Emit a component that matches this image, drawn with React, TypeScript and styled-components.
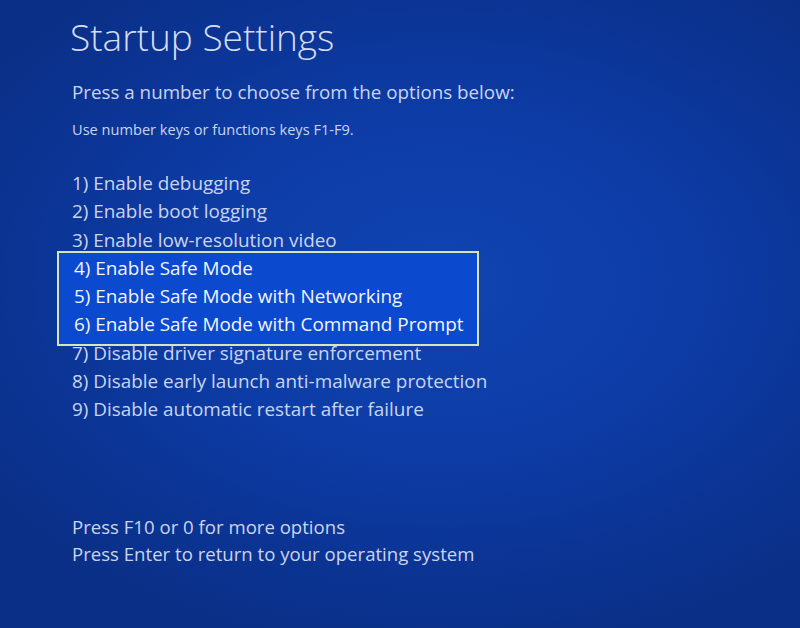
import React from 'react'
import styled, { createGlobalStyle } from 'styled-components'

const GlobalStyle = createGlobalStyle`
  html, body {
    margin: 0;
    padding: 0;
  }
  body {
    font-family: 'Open Sans', 'Noto Sans', sans-serif;
  }
`

const Screen = styled.div`
  width: 800px;
  height: 628px;
  box-sizing: border-box;
  padding: 13px 0 0 70px;
  color: #c9d5ee;
  background:
    radial-gradient(ellipse 70% 60% at 55% 45%, #1043b2 0%, #0d3ca6 45%, #0b3494 75%, #0a2f86 100%);
  overflow: hidden;
  display: flex;
  flex-direction: column;
`

const Title = styled.h1`
  margin: 0;
  font-size: 37px;
  font-weight: 300;
  color: #d5ddf1;
  line-height: 48px;
`

const Prompt = styled.p`
  margin: 18px 0 0 2px;
  font-size: 18.8px;
  font-weight: 400;
  line-height: 26px;
`

const Hint = styled.p`
  margin: 15px 0 0 2px;
  font-size: 14.6px;
  line-height: 18px;
`

const Options = styled.div`
  margin-top: 31px;
  display: flex;
  flex-direction: column;
`

const Highlight = styled.div`
  position: relative;
  margin: -3px 0 -7px -13px;
  width: 422px;
  box-sizing: border-box;
  border: 2px solid #d5e6b8;
  background: #0b49cf;
  padding: 1px 0 5px 13px;
  color: #f2f5fb;
`

const Option = styled.div`
  margin-left: 2px;
  font-size: 18.9px;
  line-height: 28.3px;
  white-space: nowrap;
`

const Footer = styled.div`
  margin: auto 0 61px 2px;
  font-size: 18.6px;
  line-height: 27px;
`

const before = [
  '1) Enable debugging',
  '2) Enable boot logging',
  '3) Enable low-resolution video',
]
const selected = [
  '4) Enable Safe Mode',
  '5) Enable Safe Mode with Networking',
  '6) Enable Safe Mode with Command Prompt',
]
const after = [
  '7) Disable driver signature enforcement',
  '8) Disable early launch anti-malware protection',
  '9) Disable automatic restart after failure',
]

export default function App() {
  return (
    <>
      <GlobalStyle />
      <Screen>
        <Title>Startup Settings</Title>
        <Prompt>Press a number to choose from the options below:</Prompt>
        <Hint>Use number keys or functions keys F1-F9.</Hint>
        <Options>
          {before.map((o) => (
            <Option key={o}>{o}</Option>
          ))}
          <Highlight>
            {selected.map((o) => (
              <Option key={o}>{o}</Option>
            ))}
          </Highlight>
          {after.map((o) => (
            <Option key={o}>{o}</Option>
          ))}
        </Options>
        <Footer>
          <div>Press F10 or 0 for more options</div>
          <div>Press Enter to return to your operating system</div>
        </Footer>
      </Screen>
    </>
  )
}
